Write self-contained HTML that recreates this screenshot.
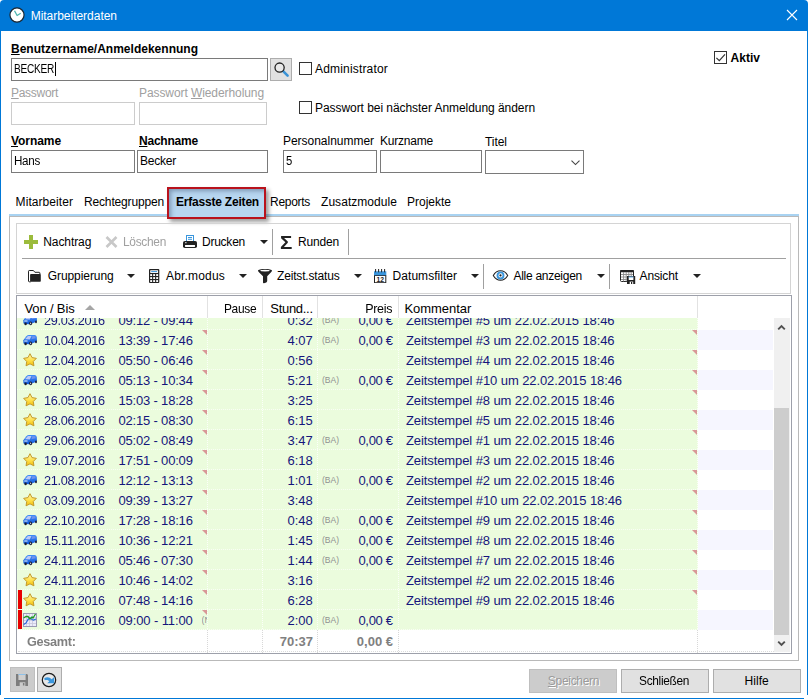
<!DOCTYPE html>
<html lang="de"><head><meta charset="utf-8"><title>Mitarbeiterdaten</title>
<style>
html,body{margin:0;padding:0;}
body{width:808px;height:699px;position:relative;overflow:hidden;background:#fff;
 font-family:"Liberation Sans",sans-serif;font-size:12px;color:#000;}
body>div,body>span,body>svg{position:absolute;box-sizing:border-box;}
.t{white-space:nowrap;line-height:16px;height:16px;}
.b{font-weight:bold;}
.g{color:#a0a0a0;}
.w{color:#fff;}
.n{color:#15157c;font-size:13px;}
.u{text-decoration:underline;}
.inp{border:1px solid #7a7a7a;background:#fff;}
.inpd{border:1px solid #cccccc;background:#fff;}
.cb{border:1px solid #333;background:#fff;}
.btn{border:1px solid #adadad;background:#e1e1e1;}
.btnd{border:1px solid #bfbfbf;background:#cccccc;}
.h{font-size:13px;}

</style></head>
<body>
<svg style="left:0;top:0" width="0" height="0"><defs><linearGradient id="cg" x1="0" y1="0" x2="0" y2="1"><stop offset="0" stop-color="#3d8dfa"/><stop offset="1" stop-color="#1558d6"/></linearGradient><linearGradient id="sg" x1="0" y1="0" x2="0" y2="1"><stop offset="0" stop-color="#fff6b0"/><stop offset=".55" stop-color="#ffe04a"/><stop offset="1" stop-color="#f2bd0c"/></linearGradient></defs></svg>
<div class="" style="left:0px;top:0px;width:808px;height:31px;background:#0078d7;border-radius:4px 4px 0 0;"></div>
<div class="" style="left:0px;top:31px;width:1px;height:664px;background:#0078d7;"></div>
<div class="" style="left:807px;top:31px;width:1px;height:664px;background:#0078d7;"></div>
<div class="" style="left:4px;top:698px;width:800px;height:1px;background:#0078d7;"></div>
<svg style="left:7.85px;top:5.85px" width="18" height="18" viewBox="0 0 18 18"><circle cx="9" cy="9" r="7.050" fill="#fff" stroke="#1c2630" stroke-width="1.200"/><path d="M6.500 4.700L9.100 9.500L12.700 7.200" stroke="#4fb5b0" stroke-width="1.300" fill="none" stroke-linejoin="round"/></svg>
<span id="t1" class="t w" style="top:7.7px;left:30.7px;letter-spacing:-0.026px;">Mitarbeiterdaten</span>
<svg style="left:782px;top:5px" width="20" height="20" viewBox="0 0 20 20"><path d="M5 5 L15 15 M15 5 L5 15" stroke="#fff" stroke-width="1.1" fill="none"/></svg>
<span id="t2" class="t b" style="top:41px;left:11px;letter-spacing:0.011px;"><span class="u">B</span>enutzername/Anmeldekennung</span>
<div class="inp" style="left:11px;top:58px;width:257px;height:23px;"></div>
<span id="t3" class="t " style="top:61px;left:14.4px;letter-spacing:-0.300px;transform:scaleX(0.8411);transform-origin:left 50%;">BECKER</span>
<div class="" style="left:55px;top:61.5px;width:1px;height:14.5px;background:#000;"></div>
<div class="btn" style="left:270px;top:58px;width:22px;height:23px;"></div>
<svg style="left:273px;top:61px" width="17" height="17" viewBox="0 0 17 17"><path d="M9.6 9.6L14.6 14.6" stroke="#3a93d6" stroke-width="2.6" stroke-linecap="round"/><circle cx="6.6" cy="6.6" r="4.6" fill="#e9e9e9" stroke="#222" stroke-width="1.3"/></svg>
<div class="cb" style="left:299px;top:62px;width:13px;height:13px;"></div>
<span id="t4" class="t " style="top:61px;left:315px;letter-spacing:0.178px;">Administrator</span>
<div class="cb" style="left:714px;top:51px;width:13px;height:13px;"></div>
<svg style="left:714px;top:51px" width="13" height="13" viewBox="0 0 13 13"><path d="M2.4 6.8L5.3 9.7L11 3.4" stroke="#333" stroke-width="1.2" fill="none"/></svg>
<span id="t5" class="t b" style="top:50px;left:730.5px;letter-spacing:0.031px;">Aktiv</span>
<span id="t6" class="t g" style="top:85px;left:11px;letter-spacing:-0.295px;"><span class="u">P</span>asswort</span>
<span id="t7" class="t g" style="top:85px;left:139px;letter-spacing:-0.083px;">Passwort <span class="u">W</span>iederholung</span>
<div class="inpd" style="left:11px;top:102px;width:124px;height:23px;"></div>
<div class="inpd" style="left:139px;top:102px;width:128px;height:23px;"></div>
<div class="cb" style="left:299px;top:101px;width:13px;height:13px;"></div>
<span id="t8" class="t " style="top:100px;left:315px;letter-spacing:-0.056px;">Passwort bei nächster Anmeldung ändern</span>
<span id="t9" class="t b" style="top:133px;left:11px;letter-spacing:-0.069px;"><span class="u">V</span>orname</span>
<span id="t10" class="t b" style="top:133px;left:139px;letter-spacing:-0.213px;"><span class="u">N</span>achname</span>
<span id="t11" class="t " style="top:133px;left:283px;letter-spacing:-0.027px;">Personalnummer</span>
<span id="t12" class="t " style="top:133px;left:380px;letter-spacing:-0.213px;">Kurzname</span>
<span id="t13" class="t " style="top:134px;left:485px;letter-spacing:-0.047px;">Titel</span>
<div class="inp" style="left:11px;top:150px;width:124px;height:23px;"></div>
<div class="inp" style="left:137px;top:150px;width:131px;height:23px;"></div>
<div class="inp" style="left:283px;top:150px;width:94px;height:23px;"></div>
<div class="inp" style="left:380px;top:150px;width:102px;height:23px;"></div>
<div class="inp" style="left:485px;top:150px;width:99px;height:24px;"></div>
<svg style="left:570px;top:160px" width="11" height="6" viewBox="0 0 11 6"><path d="M1.500 .7L5.500 4.600L9.500 .7" stroke="#444" stroke-width="1.1" fill="none"/></svg>
<span id="t14" class="t " style="top:153px;left:14px;letter-spacing:-0.300px;transform:scaleX(0.9696);transform-origin:left 50%;">Hans</span>
<span id="t15" class="t " style="top:153px;left:140px;letter-spacing:-0.227px;">Becker</span>
<span id="t16" class="t " style="top:153px;left:286px;letter-spacing:-0.300px;transform:scaleX(0.9393);transform-origin:left 50%;">5</span>
<span id="t17" class="t " style="top:194px;left:15.6px;letter-spacing:0.065px;">Mitarbeiter</span>
<span id="t18" class="t " style="top:194px;left:84px;letter-spacing:-0.159px;">Rechtegruppen</span>
<div class="" style="left:167px;top:187px;width:99px;height:32px;background:#b7d6f0;border:2px solid #b9121c;box-shadow:3px 3px 4px rgba(0,0,0,.38),inset 4px 4px 4px -2px rgba(70,90,120,.5);"></div>
<span id="t19" class="t b" style="top:194px;left:176px;letter-spacing:-0.203px;">Erfasste Zeiten</span>
<span id="t20" class="t " style="top:194px;left:270px;letter-spacing:-0.290px;">Reports</span>
<span id="t21" class="t " style="top:194px;left:321px;letter-spacing:0.052px;">Zusatzmodule</span>
<span id="t22" class="t " style="top:194px;left:407px;letter-spacing:-0.004px;">Projekte</span>
<div class="" style="left:9px;top:216px;width:790px;height:445px;border:1px solid #b9b9b9;z-index:-1;"></div>
<div class="" style="left:9px;top:214px;width:790px;height:2px;background:#a9d3f2;z-index:-1;"></div>
<div class="" style="left:16px;top:223px;width:775px;height:71px;border:1px solid #d4d4d4;"></div>
<div class="" style="left:22px;top:258px;width:764px;height:1px;background:#a0a0a0;"></div>
<svg style="left:24px;top:235px" width="14" height="14" viewBox="0 0 14 14"><path d="M5 0h4v5h5v4H9v5H5V9H0V5h5z" fill="#9bbb3c"/></svg>
<span id="t23" class="t " style="top:234px;left:43.3px;letter-spacing:-0.088px;">Nachtrag</span>
<svg style="left:105px;top:236px" width="13" height="12" viewBox="0 0 13 12"><path d="M1.5 1 L11.5 11 M11.5 1 L1.5 11" stroke="#c8c8c8" stroke-width="2.6" fill="none"/></svg>
<span id="t24" class="t g" style="top:234px;left:123.2px;letter-spacing:-0.300px;transform:scaleX(0.9936);transform-origin:left 50%;">Löschen</span>
<span id="t25" class="t " style="top:234px;left:202px;letter-spacing:-0.241px;">Drucken</span>
<div class="" style="left:272px;top:229px;width:1px;height:26px;background:#a0a0a0;"></div>
<span id="t26" class="t " style="top:234px;left:298px;letter-spacing:-0.174px;">Runden</span>
<div class="" style="left:348px;top:229px;width:1px;height:26px;background:#a0a0a0;"></div>
<span id="t27" class="t " style="top:268px;left:47.7px;letter-spacing:-0.065px;">Gruppierung</span>
<span id="t28" class="t " style="top:268px;left:166px;letter-spacing:0.181px;">Abr.modus</span>
<span id="t29" class="t " style="top:268px;left:277px;letter-spacing:-0.168px;">Zeitst.status</span>
<span id="t30" class="t " style="top:268px;left:392.6px;letter-spacing:0.040px;">Datumsfilter</span>
<div class="" style="left:483px;top:264px;width:1px;height:25px;background:#a0a0a0;"></div>
<span id="t31" class="t " style="top:268px;left:513.4px;letter-spacing:-0.266px;">Alle anzeigen</span>
<div class="" style="left:609px;top:264px;width:1px;height:25px;background:#a0a0a0;"></div>
<span id="t32" class="t " style="top:268px;left:639.5px;letter-spacing:-0.123px;">Ansicht</span>
<svg style="left:259.5px;top:240px" width="8" height="4" viewBox="0 0 8 4"><path d="M0 0h8L4 4z" fill="#222"/></svg>
<svg style="left:127px;top:274px" width="8" height="4" viewBox="0 0 8 4"><path d="M0 0h8L4 4z" fill="#222"/></svg>
<svg style="left:238.5px;top:274px" width="8" height="4" viewBox="0 0 8 4"><path d="M0 0h8L4 4z" fill="#222"/></svg>
<svg style="left:353.5px;top:274px" width="8" height="4" viewBox="0 0 8 4"><path d="M0 0h8L4 4z" fill="#222"/></svg>
<svg style="left:470.7px;top:274px" width="8" height="4" viewBox="0 0 8 4"><path d="M0 0h8L4 4z" fill="#222"/></svg>
<svg style="left:596.5px;top:274px" width="8" height="4" viewBox="0 0 8 4"><path d="M0 0h8L4 4z" fill="#222"/></svg>
<svg style="left:692.5px;top:274px" width="8" height="4" viewBox="0 0 8 4"><path d="M0 0h8L4 4z" fill="#222"/></svg>
<div class="" style="left:16px;top:295px;width:776px;height:359px;border:1px solid #9da0aa;background:#fff;"></div>
<div class="" style="left:17px;top:318px;width:681px;height:12px;background:#ebfcdd;border-bottom:1px dotted rgba(255,255,255,.7);"></div>
<div class="" style="left:17px;top:330px;width:681px;height:20px;background:#ebfcdd;border-bottom:1px dotted rgba(255,255,255,.7);"></div>
<div class="" style="left:698px;top:330px;width:75px;height:20px;background:#f6f6ff;"></div>
<div class="" style="left:17px;top:350px;width:681px;height:20px;background:#ebfcdd;border-bottom:1px dotted rgba(255,255,255,.7);"></div>
<div class="" style="left:17px;top:370px;width:681px;height:20px;background:#ebfcdd;border-bottom:1px dotted rgba(255,255,255,.7);"></div>
<div class="" style="left:698px;top:370px;width:75px;height:20px;background:#f6f6ff;"></div>
<div class="" style="left:17px;top:390px;width:681px;height:20px;background:#ebfcdd;border-bottom:1px dotted rgba(255,255,255,.7);"></div>
<div class="" style="left:17px;top:410px;width:681px;height:20px;background:#ebfcdd;border-bottom:1px dotted rgba(255,255,255,.7);"></div>
<div class="" style="left:698px;top:410px;width:75px;height:20px;background:#f6f6ff;"></div>
<div class="" style="left:17px;top:430px;width:681px;height:20px;background:#ebfcdd;border-bottom:1px dotted rgba(255,255,255,.7);"></div>
<div class="" style="left:17px;top:450px;width:681px;height:20px;background:#ebfcdd;border-bottom:1px dotted rgba(255,255,255,.7);"></div>
<div class="" style="left:698px;top:450px;width:75px;height:20px;background:#f6f6ff;"></div>
<div class="" style="left:17px;top:470px;width:681px;height:20px;background:#ebfcdd;border-bottom:1px dotted rgba(255,255,255,.7);"></div>
<div class="" style="left:17px;top:490px;width:681px;height:20px;background:#ebfcdd;border-bottom:1px dotted rgba(255,255,255,.7);"></div>
<div class="" style="left:698px;top:490px;width:75px;height:20px;background:#f6f6ff;"></div>
<div class="" style="left:17px;top:510px;width:681px;height:20px;background:#ebfcdd;border-bottom:1px dotted rgba(255,255,255,.7);"></div>
<div class="" style="left:17px;top:530px;width:681px;height:20px;background:#ebfcdd;border-bottom:1px dotted rgba(255,255,255,.7);"></div>
<div class="" style="left:698px;top:530px;width:75px;height:20px;background:#f6f6ff;"></div>
<div class="" style="left:17px;top:550px;width:681px;height:20px;background:#ebfcdd;border-bottom:1px dotted rgba(255,255,255,.7);"></div>
<div class="" style="left:17px;top:570px;width:681px;height:20px;background:#ebfcdd;border-bottom:1px dotted rgba(255,255,255,.7);"></div>
<div class="" style="left:698px;top:570px;width:75px;height:20px;background:#f6f6ff;"></div>
<div class="" style="left:17px;top:590px;width:681px;height:20px;background:#ebfcdd;border-bottom:1px dotted rgba(255,255,255,.7);"></div>
<div class="" style="left:17px;top:610px;width:681px;height:20px;background:#ebfcdd;border-bottom:1px dotted rgba(255,255,255,.7);"></div>
<div class="" style="left:698px;top:610px;width:75px;height:20px;background:#f6f6ff;"></div>
<div class="" style="left:207px;top:318px;width:1px;height:335px;border-left:1px dotted rgba(255,255,255,.8);"></div>
<div class="" style="left:262px;top:318px;width:1px;height:335px;border-left:1px dotted rgba(255,255,255,.8);"></div>
<div class="" style="left:317px;top:318px;width:1px;height:335px;border-left:1px dotted rgba(255,255,255,.8);"></div>
<div class="" style="left:398px;top:318px;width:1px;height:335px;border-left:1px dotted rgba(255,255,255,.8);"></div>
<div class="" style="left:697px;top:318px;width:1px;height:335px;border-left:1px dotted rgba(255,255,255,.8);"></div>
<svg style="left:23px;top:315px" width="14" height="11" viewBox="0 0 14 11"><path d="M.3 5.200L3.400 1.200Q4.400 0 6 0h5.500Q13.300.2 13.800 2L14 6.600 9.500 8.300 5.500 9.300.9 8.700Q.2 8 .3 5.200z" fill="url(#cg)"/><path d="M2 4.200L4.900.9l3.600.1L6.800 4.600z" fill="#bcc9f6"/><path d="M9.400 1.100l3 .2.300 2-4.300 1z" fill="#6f93ea"/><rect x="1.200" y="5.400" width="3.400" height="1.200" rx=".4" fill="#eef2fb"/><ellipse cx="2.600" cy="8.900" rx="1.200" ry="1.400" fill="#1b1b2e"/><ellipse cx="7.600" cy="8.400" rx="1.500" ry="1.800" fill="#1b1b2e"/><ellipse cx="7.600" cy="8.400" rx=".6" ry=".8" fill="#c9d2e6"/><ellipse cx="13" cy="6.900" rx=".9" ry="1.300" fill="#1b1b2e"/></svg>
<span id="t33" class="t n" style="top:313px;left:44.3px;letter-spacing:-0.300px;transform:scaleX(0.9794);transform-origin:left 50%;">29.03.2016</span>
<span id="t34" class="t n" style="top:313px;left:118.5px;letter-spacing:-0.187px;">09:12 - 09:44</span>
<span id="t35" class="t n" style="top:313px;right:495.2px;">0:32</span>
<span id="t36" class="t " style="top:312px;left:322px;font-size:8.5px;color:#909090;">(BA)</span>
<span id="t37" class="t n" style="top:313px;right:415.2px;letter-spacing:-0.293px;">0,00 €</span>
<span id="t38" class="t n" style="top:313px;left:406px;letter-spacing:-0.096px;">Zeitstempel #5 um 22.02.2015 18:46</span>
<svg style="left:23px;top:335px" width="14" height="11" viewBox="0 0 14 11"><path d="M.3 5.200L3.400 1.200Q4.400 0 6 0h5.500Q13.300.2 13.800 2L14 6.600 9.500 8.300 5.500 9.300.9 8.700Q.2 8 .3 5.200z" fill="url(#cg)"/><path d="M2 4.200L4.900.9l3.600.1L6.800 4.600z" fill="#bcc9f6"/><path d="M9.400 1.100l3 .2.300 2-4.300 1z" fill="#6f93ea"/><rect x="1.200" y="5.400" width="3.400" height="1.200" rx=".4" fill="#eef2fb"/><ellipse cx="2.600" cy="8.900" rx="1.200" ry="1.400" fill="#1b1b2e"/><ellipse cx="7.600" cy="8.400" rx="1.500" ry="1.800" fill="#1b1b2e"/><ellipse cx="7.600" cy="8.400" rx=".6" ry=".8" fill="#c9d2e6"/><ellipse cx="13" cy="6.900" rx=".9" ry="1.300" fill="#1b1b2e"/></svg>
<span id="t39" class="t n" style="top:333px;left:44.3px;letter-spacing:-0.300px;transform:scaleX(0.9794);transform-origin:left 50%;">10.04.2016</span>
<span id="t40" class="t n" style="top:333px;left:118.5px;letter-spacing:-0.187px;">13:39 - 17:46</span>
<span id="t41" class="t n" style="top:333px;right:495.2px;">4:07</span>
<span id="t42" class="t " style="top:332px;left:322px;font-size:8.5px;color:#909090;">(BA)</span>
<span id="t43" class="t n" style="top:333px;right:415.2px;letter-spacing:-0.293px;">0,00 €</span>
<span id="t44" class="t n" style="top:333px;left:406px;letter-spacing:-0.096px;">Zeitstempel #3 um 22.02.2015 18:46</span>
<svg style="left:202px;top:330px" width="5" height="5" viewBox="0 0 5 5"><path d="M0 0h5v5z" fill="#d99797"/></svg>
<svg style="left:692px;top:330px" width="5" height="5" viewBox="0 0 5 5"><path d="M0 0h5v5z" fill="#d99797"/></svg>
<svg style="left:23px;top:353px" width="14" height="14" viewBox="0 0 14 14"><path d="M7.00 0.70 L9.03 4.61 L13.37 5.33 L10.28 8.47 L10.94 12.82 L7.00 10.85 L3.06 12.82 L3.72 8.47 L0.63 5.33 L4.97 4.61z" fill="url(#sg)" stroke="#c29a2c" stroke-width="1" stroke-linejoin="round"/></svg>
<span id="t45" class="t n" style="top:353px;left:44.3px;letter-spacing:-0.300px;transform:scaleX(0.9794);transform-origin:left 50%;">12.04.2016</span>
<span id="t46" class="t n" style="top:353px;left:118.5px;letter-spacing:-0.187px;">05:50 - 06:46</span>
<span id="t47" class="t n" style="top:353px;right:495.2px;">0:56</span>
<span id="t48" class="t n" style="top:353px;left:406px;letter-spacing:-0.096px;">Zeitstempel #4 um 22.02.2015 18:46</span>
<svg style="left:202px;top:350px" width="5" height="5" viewBox="0 0 5 5"><path d="M0 0h5v5z" fill="#d99797"/></svg>
<svg style="left:692px;top:350px" width="5" height="5" viewBox="0 0 5 5"><path d="M0 0h5v5z" fill="#d99797"/></svg>
<svg style="left:23px;top:375px" width="14" height="11" viewBox="0 0 14 11"><path d="M.3 5.200L3.400 1.200Q4.400 0 6 0h5.500Q13.300.2 13.800 2L14 6.600 9.500 8.300 5.500 9.300.9 8.700Q.2 8 .3 5.200z" fill="url(#cg)"/><path d="M2 4.200L4.900.9l3.600.1L6.800 4.600z" fill="#bcc9f6"/><path d="M9.400 1.100l3 .2.300 2-4.300 1z" fill="#6f93ea"/><rect x="1.200" y="5.400" width="3.400" height="1.200" rx=".4" fill="#eef2fb"/><ellipse cx="2.600" cy="8.900" rx="1.200" ry="1.400" fill="#1b1b2e"/><ellipse cx="7.600" cy="8.400" rx="1.500" ry="1.800" fill="#1b1b2e"/><ellipse cx="7.600" cy="8.400" rx=".6" ry=".8" fill="#c9d2e6"/><ellipse cx="13" cy="6.900" rx=".9" ry="1.300" fill="#1b1b2e"/></svg>
<span id="t49" class="t n" style="top:373px;left:44.3px;letter-spacing:-0.300px;transform:scaleX(0.9794);transform-origin:left 50%;">02.05.2016</span>
<span id="t50" class="t n" style="top:373px;left:118.5px;letter-spacing:-0.187px;">05:13 - 10:34</span>
<span id="t51" class="t n" style="top:373px;right:495.2px;">5:21</span>
<span id="t52" class="t " style="top:372px;left:322px;font-size:8.5px;color:#909090;">(BA)</span>
<span id="t53" class="t n" style="top:373px;right:415.2px;letter-spacing:-0.293px;">0,00 €</span>
<span id="t54" class="t n" style="top:373px;left:406px;letter-spacing:-0.085px;">Zeitstempel #10 um 22.02.2015 18:46</span>
<svg style="left:202px;top:370px" width="5" height="5" viewBox="0 0 5 5"><path d="M0 0h5v5z" fill="#d99797"/></svg>
<svg style="left:692px;top:370px" width="5" height="5" viewBox="0 0 5 5"><path d="M0 0h5v5z" fill="#d99797"/></svg>
<svg style="left:23px;top:393px" width="14" height="14" viewBox="0 0 14 14"><path d="M7.00 0.70 L9.03 4.61 L13.37 5.33 L10.28 8.47 L10.94 12.82 L7.00 10.85 L3.06 12.82 L3.72 8.47 L0.63 5.33 L4.97 4.61z" fill="url(#sg)" stroke="#c29a2c" stroke-width="1" stroke-linejoin="round"/></svg>
<span id="t55" class="t n" style="top:393px;left:44.3px;letter-spacing:-0.300px;transform:scaleX(0.9794);transform-origin:left 50%;">16.05.2016</span>
<span id="t56" class="t n" style="top:393px;left:118.5px;letter-spacing:-0.187px;">15:03 - 18:28</span>
<span id="t57" class="t n" style="top:393px;right:495.2px;">3:25</span>
<span id="t58" class="t n" style="top:393px;left:406px;letter-spacing:-0.096px;">Zeitstempel #8 um 22.02.2015 18:46</span>
<svg style="left:202px;top:390px" width="5" height="5" viewBox="0 0 5 5"><path d="M0 0h5v5z" fill="#d99797"/></svg>
<svg style="left:692px;top:390px" width="5" height="5" viewBox="0 0 5 5"><path d="M0 0h5v5z" fill="#d99797"/></svg>
<svg style="left:23px;top:413px" width="14" height="14" viewBox="0 0 14 14"><path d="M7.00 0.70 L9.03 4.61 L13.37 5.33 L10.28 8.47 L10.94 12.82 L7.00 10.85 L3.06 12.82 L3.72 8.47 L0.63 5.33 L4.97 4.61z" fill="url(#sg)" stroke="#c29a2c" stroke-width="1" stroke-linejoin="round"/></svg>
<span id="t59" class="t n" style="top:413px;left:44.3px;letter-spacing:-0.300px;transform:scaleX(0.9794);transform-origin:left 50%;">28.06.2016</span>
<span id="t60" class="t n" style="top:413px;left:118.5px;letter-spacing:-0.187px;">02:15 - 08:30</span>
<span id="t61" class="t n" style="top:413px;right:495.2px;">6:15</span>
<span id="t62" class="t n" style="top:413px;left:406px;letter-spacing:-0.096px;">Zeitstempel #5 um 22.02.2015 18:46</span>
<svg style="left:202px;top:410px" width="5" height="5" viewBox="0 0 5 5"><path d="M0 0h5v5z" fill="#d99797"/></svg>
<svg style="left:692px;top:410px" width="5" height="5" viewBox="0 0 5 5"><path d="M0 0h5v5z" fill="#d99797"/></svg>
<svg style="left:23px;top:435px" width="14" height="11" viewBox="0 0 14 11"><path d="M.3 5.200L3.400 1.200Q4.400 0 6 0h5.500Q13.300.2 13.800 2L14 6.600 9.500 8.300 5.500 9.300.9 8.700Q.2 8 .3 5.200z" fill="url(#cg)"/><path d="M2 4.200L4.900.9l3.600.1L6.800 4.600z" fill="#bcc9f6"/><path d="M9.400 1.100l3 .2.300 2-4.300 1z" fill="#6f93ea"/><rect x="1.200" y="5.400" width="3.400" height="1.200" rx=".4" fill="#eef2fb"/><ellipse cx="2.600" cy="8.900" rx="1.200" ry="1.400" fill="#1b1b2e"/><ellipse cx="7.600" cy="8.400" rx="1.500" ry="1.800" fill="#1b1b2e"/><ellipse cx="7.600" cy="8.400" rx=".6" ry=".8" fill="#c9d2e6"/><ellipse cx="13" cy="6.900" rx=".9" ry="1.300" fill="#1b1b2e"/></svg>
<span id="t63" class="t n" style="top:433px;left:44.3px;letter-spacing:-0.300px;transform:scaleX(0.9794);transform-origin:left 50%;">29.06.2016</span>
<span id="t64" class="t n" style="top:433px;left:118.5px;letter-spacing:-0.187px;">05:02 - 08:49</span>
<span id="t65" class="t n" style="top:433px;right:495.2px;">3:47</span>
<span id="t66" class="t " style="top:432px;left:322px;font-size:8.5px;color:#909090;">(BA)</span>
<span id="t67" class="t n" style="top:433px;right:415.2px;letter-spacing:-0.293px;">0,00 €</span>
<span id="t68" class="t n" style="top:433px;left:406px;letter-spacing:-0.096px;">Zeitstempel #1 um 22.02.2015 18:46</span>
<svg style="left:202px;top:430px" width="5" height="5" viewBox="0 0 5 5"><path d="M0 0h5v5z" fill="#d99797"/></svg>
<svg style="left:692px;top:430px" width="5" height="5" viewBox="0 0 5 5"><path d="M0 0h5v5z" fill="#d99797"/></svg>
<svg style="left:23px;top:453px" width="14" height="14" viewBox="0 0 14 14"><path d="M7.00 0.70 L9.03 4.61 L13.37 5.33 L10.28 8.47 L10.94 12.82 L7.00 10.85 L3.06 12.82 L3.72 8.47 L0.63 5.33 L4.97 4.61z" fill="url(#sg)" stroke="#c29a2c" stroke-width="1" stroke-linejoin="round"/></svg>
<span id="t69" class="t n" style="top:453px;left:44.3px;letter-spacing:-0.300px;transform:scaleX(0.9794);transform-origin:left 50%;">19.07.2016</span>
<span id="t70" class="t n" style="top:453px;left:118.5px;letter-spacing:-0.187px;">17:51 - 00:09</span>
<span id="t71" class="t n" style="top:453px;right:495.2px;">6:18</span>
<span id="t72" class="t n" style="top:453px;left:406px;letter-spacing:-0.096px;">Zeitstempel #3 um 22.02.2015 18:46</span>
<svg style="left:202px;top:450px" width="5" height="5" viewBox="0 0 5 5"><path d="M0 0h5v5z" fill="#d99797"/></svg>
<svg style="left:692px;top:450px" width="5" height="5" viewBox="0 0 5 5"><path d="M0 0h5v5z" fill="#d99797"/></svg>
<svg style="left:23px;top:475px" width="14" height="11" viewBox="0 0 14 11"><path d="M.3 5.200L3.400 1.200Q4.400 0 6 0h5.500Q13.300.2 13.800 2L14 6.600 9.500 8.300 5.500 9.300.9 8.700Q.2 8 .3 5.200z" fill="url(#cg)"/><path d="M2 4.200L4.900.9l3.600.1L6.800 4.600z" fill="#bcc9f6"/><path d="M9.400 1.100l3 .2.300 2-4.300 1z" fill="#6f93ea"/><rect x="1.200" y="5.400" width="3.400" height="1.200" rx=".4" fill="#eef2fb"/><ellipse cx="2.600" cy="8.900" rx="1.200" ry="1.400" fill="#1b1b2e"/><ellipse cx="7.600" cy="8.400" rx="1.500" ry="1.800" fill="#1b1b2e"/><ellipse cx="7.600" cy="8.400" rx=".6" ry=".8" fill="#c9d2e6"/><ellipse cx="13" cy="6.900" rx=".9" ry="1.300" fill="#1b1b2e"/></svg>
<span id="t73" class="t n" style="top:473px;left:44.3px;letter-spacing:-0.300px;transform:scaleX(0.9794);transform-origin:left 50%;">21.08.2016</span>
<span id="t74" class="t n" style="top:473px;left:118.5px;letter-spacing:-0.187px;">12:12 - 13:13</span>
<span id="t75" class="t n" style="top:473px;right:495.2px;">1:01</span>
<span id="t76" class="t " style="top:472px;left:322px;font-size:8.5px;color:#909090;">(BA)</span>
<span id="t77" class="t n" style="top:473px;right:415.2px;letter-spacing:-0.293px;">0,00 €</span>
<span id="t78" class="t n" style="top:473px;left:406px;letter-spacing:-0.096px;">Zeitstempel #2 um 22.02.2015 18:46</span>
<svg style="left:202px;top:470px" width="5" height="5" viewBox="0 0 5 5"><path d="M0 0h5v5z" fill="#d99797"/></svg>
<svg style="left:692px;top:470px" width="5" height="5" viewBox="0 0 5 5"><path d="M0 0h5v5z" fill="#d99797"/></svg>
<svg style="left:23px;top:493px" width="14" height="14" viewBox="0 0 14 14"><path d="M7.00 0.70 L9.03 4.61 L13.37 5.33 L10.28 8.47 L10.94 12.82 L7.00 10.85 L3.06 12.82 L3.72 8.47 L0.63 5.33 L4.97 4.61z" fill="url(#sg)" stroke="#c29a2c" stroke-width="1" stroke-linejoin="round"/></svg>
<span id="t79" class="t n" style="top:493px;left:44.3px;letter-spacing:-0.300px;transform:scaleX(0.9794);transform-origin:left 50%;">03.09.2016</span>
<span id="t80" class="t n" style="top:493px;left:118.5px;letter-spacing:-0.187px;">09:39 - 13:27</span>
<span id="t81" class="t n" style="top:493px;right:495.2px;">3:48</span>
<span id="t82" class="t n" style="top:493px;left:406px;letter-spacing:-0.085px;">Zeitstempel #10 um 22.02.2015 18:46</span>
<svg style="left:202px;top:490px" width="5" height="5" viewBox="0 0 5 5"><path d="M0 0h5v5z" fill="#d99797"/></svg>
<svg style="left:692px;top:490px" width="5" height="5" viewBox="0 0 5 5"><path d="M0 0h5v5z" fill="#d99797"/></svg>
<svg style="left:23px;top:515px" width="14" height="11" viewBox="0 0 14 11"><path d="M.3 5.200L3.400 1.200Q4.400 0 6 0h5.500Q13.300.2 13.800 2L14 6.600 9.500 8.300 5.500 9.300.9 8.700Q.2 8 .3 5.200z" fill="url(#cg)"/><path d="M2 4.200L4.900.9l3.600.1L6.800 4.600z" fill="#bcc9f6"/><path d="M9.400 1.100l3 .2.300 2-4.300 1z" fill="#6f93ea"/><rect x="1.200" y="5.400" width="3.400" height="1.200" rx=".4" fill="#eef2fb"/><ellipse cx="2.600" cy="8.900" rx="1.200" ry="1.400" fill="#1b1b2e"/><ellipse cx="7.600" cy="8.400" rx="1.500" ry="1.800" fill="#1b1b2e"/><ellipse cx="7.600" cy="8.400" rx=".6" ry=".8" fill="#c9d2e6"/><ellipse cx="13" cy="6.900" rx=".9" ry="1.300" fill="#1b1b2e"/></svg>
<span id="t83" class="t n" style="top:513px;left:44.3px;letter-spacing:-0.300px;transform:scaleX(0.9794);transform-origin:left 50%;">22.10.2016</span>
<span id="t84" class="t n" style="top:513px;left:118.5px;letter-spacing:-0.187px;">17:28 - 18:16</span>
<span id="t85" class="t n" style="top:513px;right:495.2px;">0:48</span>
<span id="t86" class="t " style="top:512px;left:322px;font-size:8.5px;color:#909090;">(BA)</span>
<span id="t87" class="t n" style="top:513px;right:415.2px;letter-spacing:-0.293px;">0,00 €</span>
<span id="t88" class="t n" style="top:513px;left:406px;letter-spacing:-0.096px;">Zeitstempel #9 um 22.02.2015 18:46</span>
<svg style="left:202px;top:510px" width="5" height="5" viewBox="0 0 5 5"><path d="M0 0h5v5z" fill="#d99797"/></svg>
<svg style="left:692px;top:510px" width="5" height="5" viewBox="0 0 5 5"><path d="M0 0h5v5z" fill="#d99797"/></svg>
<svg style="left:23px;top:535px" width="14" height="11" viewBox="0 0 14 11"><path d="M.3 5.200L3.400 1.200Q4.400 0 6 0h5.500Q13.300.2 13.800 2L14 6.600 9.500 8.300 5.500 9.300.9 8.700Q.2 8 .3 5.200z" fill="url(#cg)"/><path d="M2 4.200L4.900.9l3.600.1L6.800 4.600z" fill="#bcc9f6"/><path d="M9.400 1.100l3 .2.300 2-4.300 1z" fill="#6f93ea"/><rect x="1.200" y="5.400" width="3.400" height="1.200" rx=".4" fill="#eef2fb"/><ellipse cx="2.600" cy="8.900" rx="1.200" ry="1.400" fill="#1b1b2e"/><ellipse cx="7.600" cy="8.400" rx="1.500" ry="1.800" fill="#1b1b2e"/><ellipse cx="7.600" cy="8.400" rx=".6" ry=".8" fill="#c9d2e6"/><ellipse cx="13" cy="6.900" rx=".9" ry="1.300" fill="#1b1b2e"/></svg>
<span id="t89" class="t n" style="top:533px;left:44.3px;letter-spacing:-0.300px;transform:scaleX(0.9949);transform-origin:left 50%;">15.11.2016</span>
<span id="t90" class="t n" style="top:533px;left:118.5px;letter-spacing:-0.187px;">10:36 - 12:21</span>
<span id="t91" class="t n" style="top:533px;right:495.2px;">1:45</span>
<span id="t92" class="t " style="top:532px;left:322px;font-size:8.5px;color:#909090;">(BA)</span>
<span id="t93" class="t n" style="top:533px;right:415.2px;letter-spacing:-0.293px;">0,00 €</span>
<span id="t94" class="t n" style="top:533px;left:406px;letter-spacing:-0.096px;">Zeitstempel #8 um 22.02.2015 18:46</span>
<svg style="left:202px;top:530px" width="5" height="5" viewBox="0 0 5 5"><path d="M0 0h5v5z" fill="#d99797"/></svg>
<svg style="left:692px;top:530px" width="5" height="5" viewBox="0 0 5 5"><path d="M0 0h5v5z" fill="#d99797"/></svg>
<svg style="left:23px;top:555px" width="14" height="11" viewBox="0 0 14 11"><path d="M.3 5.200L3.400 1.200Q4.400 0 6 0h5.500Q13.300.2 13.800 2L14 6.600 9.500 8.300 5.500 9.300.9 8.700Q.2 8 .3 5.200z" fill="url(#cg)"/><path d="M2 4.200L4.900.9l3.600.1L6.800 4.600z" fill="#bcc9f6"/><path d="M9.400 1.100l3 .2.300 2-4.300 1z" fill="#6f93ea"/><rect x="1.200" y="5.400" width="3.400" height="1.200" rx=".4" fill="#eef2fb"/><ellipse cx="2.600" cy="8.900" rx="1.200" ry="1.400" fill="#1b1b2e"/><ellipse cx="7.600" cy="8.400" rx="1.500" ry="1.800" fill="#1b1b2e"/><ellipse cx="7.600" cy="8.400" rx=".6" ry=".8" fill="#c9d2e6"/><ellipse cx="13" cy="6.900" rx=".9" ry="1.300" fill="#1b1b2e"/></svg>
<span id="t95" class="t n" style="top:553px;left:44.3px;letter-spacing:-0.300px;transform:scaleX(0.9949);transform-origin:left 50%;">24.11.2016</span>
<span id="t96" class="t n" style="top:553px;left:118.5px;letter-spacing:-0.187px;">05:46 - 07:30</span>
<span id="t97" class="t n" style="top:553px;right:495.2px;">1:44</span>
<span id="t98" class="t " style="top:552px;left:322px;font-size:8.5px;color:#909090;">(BA)</span>
<span id="t99" class="t n" style="top:553px;right:415.2px;letter-spacing:-0.293px;">0,00 €</span>
<span id="t100" class="t n" style="top:553px;left:406px;letter-spacing:-0.096px;">Zeitstempel #7 um 22.02.2015 18:46</span>
<svg style="left:202px;top:550px" width="5" height="5" viewBox="0 0 5 5"><path d="M0 0h5v5z" fill="#d99797"/></svg>
<svg style="left:692px;top:550px" width="5" height="5" viewBox="0 0 5 5"><path d="M0 0h5v5z" fill="#d99797"/></svg>
<svg style="left:23px;top:573px" width="14" height="14" viewBox="0 0 14 14"><path d="M7.00 0.70 L9.03 4.61 L13.37 5.33 L10.28 8.47 L10.94 12.82 L7.00 10.85 L3.06 12.82 L3.72 8.47 L0.63 5.33 L4.97 4.61z" fill="url(#sg)" stroke="#c29a2c" stroke-width="1" stroke-linejoin="round"/></svg>
<span id="t101" class="t n" style="top:573px;left:44.3px;letter-spacing:-0.300px;transform:scaleX(0.9949);transform-origin:left 50%;">24.11.2016</span>
<span id="t102" class="t n" style="top:573px;left:118.5px;letter-spacing:-0.187px;">10:46 - 14:02</span>
<span id="t103" class="t n" style="top:573px;right:495.2px;">3:16</span>
<span id="t104" class="t n" style="top:573px;left:406px;letter-spacing:-0.096px;">Zeitstempel #2 um 22.02.2015 18:46</span>
<svg style="left:202px;top:570px" width="5" height="5" viewBox="0 0 5 5"><path d="M0 0h5v5z" fill="#d99797"/></svg>
<svg style="left:692px;top:570px" width="5" height="5" viewBox="0 0 5 5"><path d="M0 0h5v5z" fill="#d99797"/></svg>
<svg style="left:23px;top:593px" width="14" height="14" viewBox="0 0 14 14"><path d="M7.00 0.70 L9.03 4.61 L13.37 5.33 L10.28 8.47 L10.94 12.82 L7.00 10.85 L3.06 12.82 L3.72 8.47 L0.63 5.33 L4.97 4.61z" fill="url(#sg)" stroke="#c29a2c" stroke-width="1" stroke-linejoin="round"/></svg>
<span id="t105" class="t n" style="top:593px;left:44.3px;letter-spacing:-0.300px;transform:scaleX(0.9794);transform-origin:left 50%;">31.12.2016</span>
<span id="t106" class="t n" style="top:593px;left:118.5px;letter-spacing:-0.187px;">07:48 - 14:16</span>
<span id="t107" class="t n" style="top:593px;right:495.2px;">6:28</span>
<span id="t108" class="t n" style="top:593px;left:406px;letter-spacing:-0.096px;">Zeitstempel #9 um 22.02.2015 18:46</span>
<svg style="left:202px;top:590px" width="5" height="5" viewBox="0 0 5 5"><path d="M0 0h5v5z" fill="#d99797"/></svg>
<svg style="left:692px;top:590px" width="5" height="5" viewBox="0 0 5 5"><path d="M0 0h5v5z" fill="#d99797"/></svg>
<div class="" style="left:18px;top:590px;width:4px;height:19px;background:#e80000;"></div>
<svg style="left:23px;top:613px" width="14" height="14" viewBox="0 0 14 14"><rect x=".5" y=".5" width="13" height="13" fill="#ececfa" stroke="#9a9ab2"/><path d="M3.500 1v12M6.500 1v12M9.500 1v12M1 4.500h12M1 7.500h12M1 10.500h12" stroke="#c9c9dc" stroke-width=".8"/><path d="M.6 11.500L3 10l2-3.500L7 5l2 1.500 1.500.5L13 6" stroke="#2a6ad8" stroke-width="1.200" fill="none"/><path d="M.6 5L3 3.500h2L7 6l2-2 1 1 2.500-4" stroke="#1f9a22" stroke-width="1.300" fill="none"/></svg>
<span id="t109" class="t n" style="top:613px;left:44.3px;letter-spacing:-0.300px;transform:scaleX(0.9794);transform-origin:left 50%;">31.12.2016</span>
<span id="t110" class="t n" style="top:613px;left:118.5px;letter-spacing:-0.112px;">09:00 - 11:00</span>
<span id="t111" class="t n" style="top:613px;right:495.2px;">2:00</span>
<span id="t112" class="t " style="top:612px;left:322px;font-size:8.5px;color:#909090;">(BA)</span>
<span id="t113" class="t n" style="top:613px;right:415.2px;letter-spacing:-0.293px;">0,00 €</span>
<svg style="left:202px;top:610px" width="5" height="5" viewBox="0 0 5 5"><path d="M0 0h5v5z" fill="#d99797"/></svg>
<span id="t114" class="t " style="top:612px;left:201.6px;font-size:8.5px;color:#909090;width:5.6px;overflow:hidden;">(N</span>
<div class="" style="left:18px;top:610px;width:4px;height:19px;background:#e80000;"></div>
<div class="" style="left:17px;top:296px;width:774px;height:22px;background:#fff;"></div>
<div class="" style="left:207px;top:296px;width:1px;height:22px;background:#e2e2e2;"></div>
<div class="" style="left:262px;top:296px;width:1px;height:22px;background:#e2e2e2;"></div>
<div class="" style="left:317px;top:296px;width:1px;height:22px;background:#e2e2e2;"></div>
<div class="" style="left:398px;top:296px;width:1px;height:22px;background:#e2e2e2;"></div>
<div class="" style="left:697px;top:296px;width:1px;height:22px;background:#e2e2e2;"></div>
<span id="t115" class="t h" style="top:301px;left:24.5px;letter-spacing:-0.146px;">Von / Bis</span>
<svg style="left:85px;top:305px" width="10" height="5" viewBox="0 0 10 5"><path d="M0 5L5 0l5 5z" fill="#a6a6a6"/></svg>
<span id="t116" class="t h" style="top:301px;right:551.7px;letter-spacing:-0.300px;transform:scaleX(0.9187);transform-origin:right 50%;">Pause</span>
<span id="t117" class="t h" style="top:301px;left:270.3px;letter-spacing:-0.300px;">Stund...</span>
<span id="t118" class="t h" style="top:301px;right:416.2px;letter-spacing:-0.300px;transform:scaleX(0.9600);transform-origin:right 50%;">Preis</span>
<span id="t119" class="t h" style="top:301px;left:404.4px;letter-spacing:-0.034px;">Kommentar</span>
<div class="" style="left:18px;top:651px;width:756px;height:1px;border-top:1px dotted #dcdcdc;"></div>
<div class="" style="left:207px;top:630px;width:1px;height:23px;border-left:1px dotted #d8d8d8;"></div>
<div class="" style="left:262px;top:630px;width:1px;height:23px;border-left:1px dotted #d8d8d8;"></div>
<div class="" style="left:317px;top:630px;width:1px;height:23px;border-left:1px dotted #d8d8d8;"></div>
<div class="" style="left:398px;top:630px;width:1px;height:23px;border-left:1px dotted #d8d8d8;"></div>
<div class="" style="left:697px;top:630px;width:1px;height:23px;border-left:1px dotted #d8d8d8;"></div>
<span id="t120" class="t b" style="top:634px;left:26.9px;letter-spacing:-0.300px;transform:scaleX(0.9753);transform-origin:left 50%;color:#808080;font-size:13px;">Gesamt:</span>
<span id="t121" class="t b" style="top:634px;right:495px;color:#808080;font-size:13px;">70:37</span>
<span id="t122" class="t b" style="top:634px;right:415px;color:#808080;font-size:13px;">0,00 €</span>
<div class="" style="left:774px;top:318px;width:16px;height:334px;background:#f0f0f0;"></div>
<div class="" style="left:774px;top:408px;width:15px;height:227px;background:#cdcdcd;"></div>
<svg style="left:777px;top:323px" width="9" height="8" viewBox="0 0 9 8"><path d="M1.200 6.300L4.500 3l3.300 3.300" stroke="#505050" stroke-width="1.900" fill="none"/></svg>
<svg style="left:777px;top:640px" width="9" height="8" viewBox="0 0 9 8"><path d="M1.200 1.700L4.500 5l3.300-3.300" stroke="#505050" stroke-width="1.900" fill="none"/></svg>
<div class="btnd" style="left:10px;top:667px;width:25px;height:25px;"></div>
<div class="btn" style="left:37px;top:667px;width:25px;height:25px;"></div>
<div class="btnd" style="left:529px;top:669px;width:88px;height:24px;"></div>
<div class="btn" style="left:621px;top:669px;width:88px;height:24px;"></div>
<div class="btn" style="left:713px;top:669px;width:88px;height:24px;"></div>
<span id="t123" class="t " style="top:673px;left:547.8px;letter-spacing:-0.300px;color:#9a9a9a;text-shadow:1px 1px 0 #fff;"><span class="u">S</span>peichern</span>
<span id="t124" class="t " style="top:673px;left:639.4px;letter-spacing:-0.300px;transform:scaleX(0.9906);transform-origin:left 50%;">Schließen</span>
<span id="t125" class="t " style="top:673px;left:744.5px;letter-spacing:0.057px;">Hilfe</span>
<svg style="left:182px;top:234px" width="16" height="15" viewBox="0 0 16 15"><rect x="4.500" y="1.500" width="7" height="6" fill="#fff" stroke="#3a96dd"/><path d="M6 3.500h4M6 5.300h4" stroke="#3a96dd"/><rect x="1" y="7" width="14" height="7" rx="1.800" fill="#222"/><rect x="3" y="10.900" width="10" height="2.100" rx=".4" fill="#fff"/><rect x="3" y="8.200" width="1.600" height="1" fill="#ddd"/></svg>
<span id="t126" class="t " style="top:232px;left:279.6px;font-size:19px;line-height:22px;height:22px;font-weight:bold;color:#222;transform:scaleX(1.08);transform-origin:left;">Σ</span>
<svg style="left:27px;top:269px" width="15" height="14" viewBox="0 0 15 14"><path d="M1.500 12V2.200c0-.4.300-.7.700-.7H6.400l1.500 1.800h4.300c.4 0 .7.300.7.700v1.200" fill="none" stroke="#222"/><rect x="3.100" y="5.100" width="10.700" height="7.700" rx=".8" fill="#222"/><path d="M1.500 12c0 .5.300.8.800.8h1.500" stroke="#222" fill="none"/></svg>
<svg style="left:149px;top:269px" width="11" height="14" viewBox="0 0 11 14"><rect x="0" y="0" width="10.300" height="14" rx="1" fill="#222"/><rect x="1.200" y="1.200" width="7.900" height="2.800" rx=".4" fill="#fff"/><path d="M2.200 2.600h5.900" stroke="#3a96dd"/><rect x="1.2" y="5.1" width="1.900" height="1.900" fill="#fff"/><rect x="4.2" y="5.1" width="1.900" height="1.900" fill="#fff"/><rect x="7.2" y="5.1" width="1.900" height="1.900" fill="#fff"/><rect x="1.2" y="8.1" width="1.900" height="1.900" fill="#fff"/><rect x="4.2" y="8.1" width="1.900" height="1.900" fill="#fff"/><rect x="7.2" y="8.1" width="1.900" height="1.900" fill="#fff"/><rect x="1.2" y="11.1" width="1.900" height="1.900" fill="#fff"/><rect x="4.2" y="11.1" width="1.900" height="1.900" fill="#fff"/><rect x="7.2" y="11.1" width="1.900" height="1.900" fill="#fff"/></svg>
<svg style="left:257px;top:268px" width="16" height="16" viewBox="0 0 16 16"><path d="M1 2.700C1 1.600 4 1 8 1s7 .6 7 1.700c0 .6-.5 1.100-1.200 1.700L10.200 8.200V13c0 .6-.4 1.100-.9 1.400l-2.300.8c-.6.200-1-.1-1-.7V8.200L2.200 4.400C1.500 3.800 1 3.300 1 2.700z" fill="#222"/><ellipse cx="8" cy="2.600" rx="4.700" ry=".9" fill="#fff"/></svg>
<svg style="left:374px;top:269px" width="13" height="14" viewBox="0 0 13 14"><rect x=".5" y="6.500" width="11.300" height="7.200" fill="#fff" stroke="#222"/><rect x="0" y="2.300" width="12.300" height="4" fill="#3a96dd"/><rect x="1.1" y="0" width="1" height="3.300" fill="#222"/><rect x="4.1" y="0" width="1" height="3.300" fill="#222"/><rect x="7.1" y="0" width="1" height="3.300" fill="#222"/><rect x="10.1" y="0" width="1" height="3.300" fill="#222"/><text x="6.200" y="12.600" text-anchor="middle" font-family="Liberation Sans,sans-serif" font-weight="bold" font-size="6.500" fill="#222" textLength="7.500" lengthAdjust="spacingAndGlyphs">12</text></svg>
<svg style="left:492px;top:269px" width="17" height="13" viewBox="0 0 17 13"><path d="M1.300 6.400C3 3.400 5.700 1.700 8.500 1.700s5.500 1.700 7.200 4.700c-1.700 3-4.400 4.700-7.200 4.700S3 9.400 1.300 6.400z" fill="#fff" stroke="#222" stroke-width="1.100"/><circle cx="8.500" cy="6.400" r="3" fill="#fff" stroke="#3a96dd" stroke-width="1.900"/><circle cx="8.500" cy="6.400" r="1.100" fill="#222"/></svg>
<svg style="left:620px;top:270px" width="16" height="14" viewBox="0 0 16 14"><rect x=".5" y=".5" width="13" height="11" rx="1" fill="#fff" stroke="#222"/><rect x="0" y="0" width="14" height="2.200" rx="1" fill="#222"/><path d="M3.6 2v9.500" stroke="#888" stroke-width=".9"/><path d="M6.2 2v9.500" stroke="#888" stroke-width=".9"/><path d="M8.8 2v9.500" stroke="#888" stroke-width=".9"/><path d="M11.2 2v9.500" stroke="#888" stroke-width=".9"/><path d="M1 4.5h12" stroke="#888" stroke-width=".9"/><path d="M1 7h12" stroke="#888" stroke-width=".9"/><path d="M1 9.5h12" stroke="#888" stroke-width=".9"/><rect x="7" y="6" width="8.200" height="8" fill="#222"/><rect x="8.700" y="6.700" width="4.700" height="3.300" fill="#fff"/><path d="M8.700 7h4.700" stroke="#3a96dd" stroke-width=".8"/><rect x="9.700" y="11.600" width="3.500" height="2.400" fill="#fff"/><rect x="11" y="12" width="1.200" height="2" fill="#222"/></svg>
<svg style="left:16px;top:674px" width="12" height="12" viewBox="0 0 12 12"><path d="M0 0h11l1 1v11H0z" fill="#7d7d7d"/><rect x="2.400" y="0" width="7.200" height="6" fill="#cfcfcf"/><path d="M2.400 .5h7.200" stroke="#8fc1e8" stroke-width="1"/><rect x="3.700" y="8.300" width="5.600" height="3.700" fill="#cccccc"/><rect x="6.900" y="9" width="1.500" height="2.500" fill="#7d7d7d"/></svg>
<svg style="left:41px;top:671.8px" width="16" height="16" viewBox="0 0 16 16"><circle cx="8" cy="8" r="6.700" fill="#e8e8e8" stroke="#1a1a1a" stroke-width="1.200"/><path d="M13.200 5.100V11.300H6.200L8.300 9.300C7.200 8 5.600 7.600 3.900 8.200 3.300 7.500 3.200 6.700 3.500 6.100 6 4.500 8.800 5.100 10.700 7.300z" fill="#3a96dd"/></svg>
</body></html>
